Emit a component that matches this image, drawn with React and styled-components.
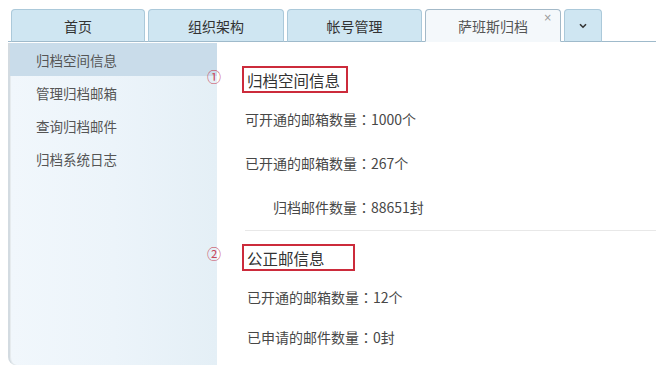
import React from "react";
import styled, { createGlobalStyle } from "styled-components";

const GlobalStyle = createGlobalStyle`
  body {
    margin: 0;
    background: #ffffff;
    font-family: "Noto Sans CJK SC", "Noto Sans", sans-serif;
    color: #333;
  }
`;

const Page = styled.div`
  width: 656px;
  height: 386px;
  overflow: hidden;
  padding-left: 8px;
  box-sizing: border-box;
`;

const TabBar = styled.div`
  display: flex;
  align-items: flex-end;
  gap: 3px;
  padding: 8px 0 0 3px;
  border-bottom: 1px solid #9fbacb;
  height: 42px;
  box-sizing: border-box;
`;

const Tab = styled.div`
  position: relative;
  width: ${(p) => p.$w}px;
  height: 33px;
  margin-bottom: -1px;
  display: flex;
  align-items: center;
  justify-content: center;
  box-sizing: border-box;
  border: 1px solid ${(p) => (p.$active ? "#a3b9c8" : "#abc9da")};
  border-bottom: 1px solid ${(p) => (p.$active ? "#f4f8fb" : "#9fbacb")};
  border-radius: 4px 4px 0 0;
  background: ${(p) => (p.$active ? "#f4f8fb" : "#cfe6f2")};
  color: ${(p) => (p.$active ? "#555" : "#333")};
  font-size: 14px;
`;

const Close = styled.span`
  position: absolute;
  top: 2px;
  right: 8px;
  font-size: 10px;
  color: #999;
  font-family: "DejaVu Sans", sans-serif;
`;

const Body = styled.div`
  display: flex;
  align-items: flex-start;
`;

const Sidebar = styled.nav`
  width: 209px;
  height: 322px;
  margin-top: 1px;
  flex-shrink: 0;
  box-sizing: border-box;
  border-left: 2px solid #d3dbe1;
  border-radius: 0 0 0 8px;
  background: linear-gradient(90deg, #f1f7fc 0%, #ecf4fa 50%, #e4eff6 100%);
  box-shadow: inset 1px 0 0 #e6ebee;
`;

const NavItem = styled.div`
  height: 33px;
  display: flex;
  align-items: center;
  padding-left: 26px;
  font-size: 13.5px;
  color: #555;
  background: ${(p) => (p.$active ? "#c9dcea" : "transparent")};
`;

const Content = styled.main`
  flex: 1;
  padding: 24px 0 0 25px;
`;

const SectionHead = styled.div`
  position: relative;
  height: 27px;
  display: flex;
  align-items: center;
`;

const Marker = styled.span`
  position: absolute;
  left: -35px;
  top: ${(p) => p.$top}px;
  font-size: 14px;
  line-height: 1;
  color: #c8465a;
`;

const HeadBox = styled.div`
  height: 100%;
  display: flex;
  align-items: center;
  box-sizing: border-box;
  border: 2px solid #cc2b3b;
  padding: 0 ${(p) => p.$pr}px 0 3px;
  font-size: 15.5px;
  color: #333;
`;

const InfoList = styled.div`
  display: grid;
  grid-template-columns: max-content max-content;
  grid-auto-rows: ${(p) => p.$row}px;
  align-items: center;
  padding-left: ${(p) => p.$pl}px;
  margin-top: ${(p) => p.$mt}px;
  font-size: 14px;
  color: #474747;
`;

const Label = styled.span`
  justify-self: end;
`;

const Colon = styled.span`
  font-family: "Noto Sans CJK JP", sans-serif;
`;

const Value = styled.span``;

const Divider = styled.hr`
  margin: 1px 0 0 3px;
  border: none;
  border-top: 1px solid #e8e8e8;
`;

const SectionGap = styled.div`
  height: 13px;
`;

const Chevron = () => (
  <svg width="8" height="6" viewBox="0 0 8 6">
    <path d="M1 1.2 L4 4.2 L7 1.2" fill="none" stroke="#333" strokeWidth="1.6" />
  </svg>
);

const tabs = [
  { label: "首页", w: 134 },
  { label: "组织架构", w: 136 },
  { label: "帐号管理", w: 135 },
  { label: "萨班斯归档", w: 136, active: true },
];

const menu = ["归档空间信息", "管理归档邮箱", "查询归档邮件", "归档系统日志"];

const Info = ({ label, value }) => (
  <>
    <Label>
      {label}
      <Colon>：</Colon>
    </Label>
    <Value>{value}</Value>
  </>
);

export default function App() {
  return (
    <Page>
      <GlobalStyle />
      <TabBar>
        {tabs.map((t) => (
          <Tab key={t.label} $w={t.w} $active={t.active}>
            {t.label}
            {t.active && <Close>×</Close>}
          </Tab>
        ))}
        <Tab $w={38}>
          <Chevron />
        </Tab>
      </TabBar>
      <Body>
        <Sidebar>
          {menu.map((m, i) => (
            <NavItem key={m} $active={i === 0}>
              {m}
            </NavItem>
          ))}
        </Sidebar>
        <Content>
          <SectionHead>
            <Marker $top={3}>①</Marker>
            <HeadBox $pr={6}>归档空间信息</HeadBox>
          </SectionHead>
          <InfoList $row={44} $pl={3} $mt={4}>
            <Info label="可开通的邮箱数量" value="1000个" />
            <Info label="已开通的邮箱数量" value="267个" />
            <Info label="归档邮件数量" value="88651封" />
          </InfoList>
          <Divider />
          <SectionGap />
          <SectionHead>
            <Marker $top={2}>②</Marker>
            <HeadBox $pr={28}>公正邮信息</HeadBox>
          </SectionHead>
          <InfoList $row={40} $pl={5} $mt={6}>
            <Info label="已开通的邮箱数量" value="12个" />
            <Info label="已申请的邮件数量" value="0封" />
          </InfoList>
        </Content>
      </Body>
    </Page>
  );
}
